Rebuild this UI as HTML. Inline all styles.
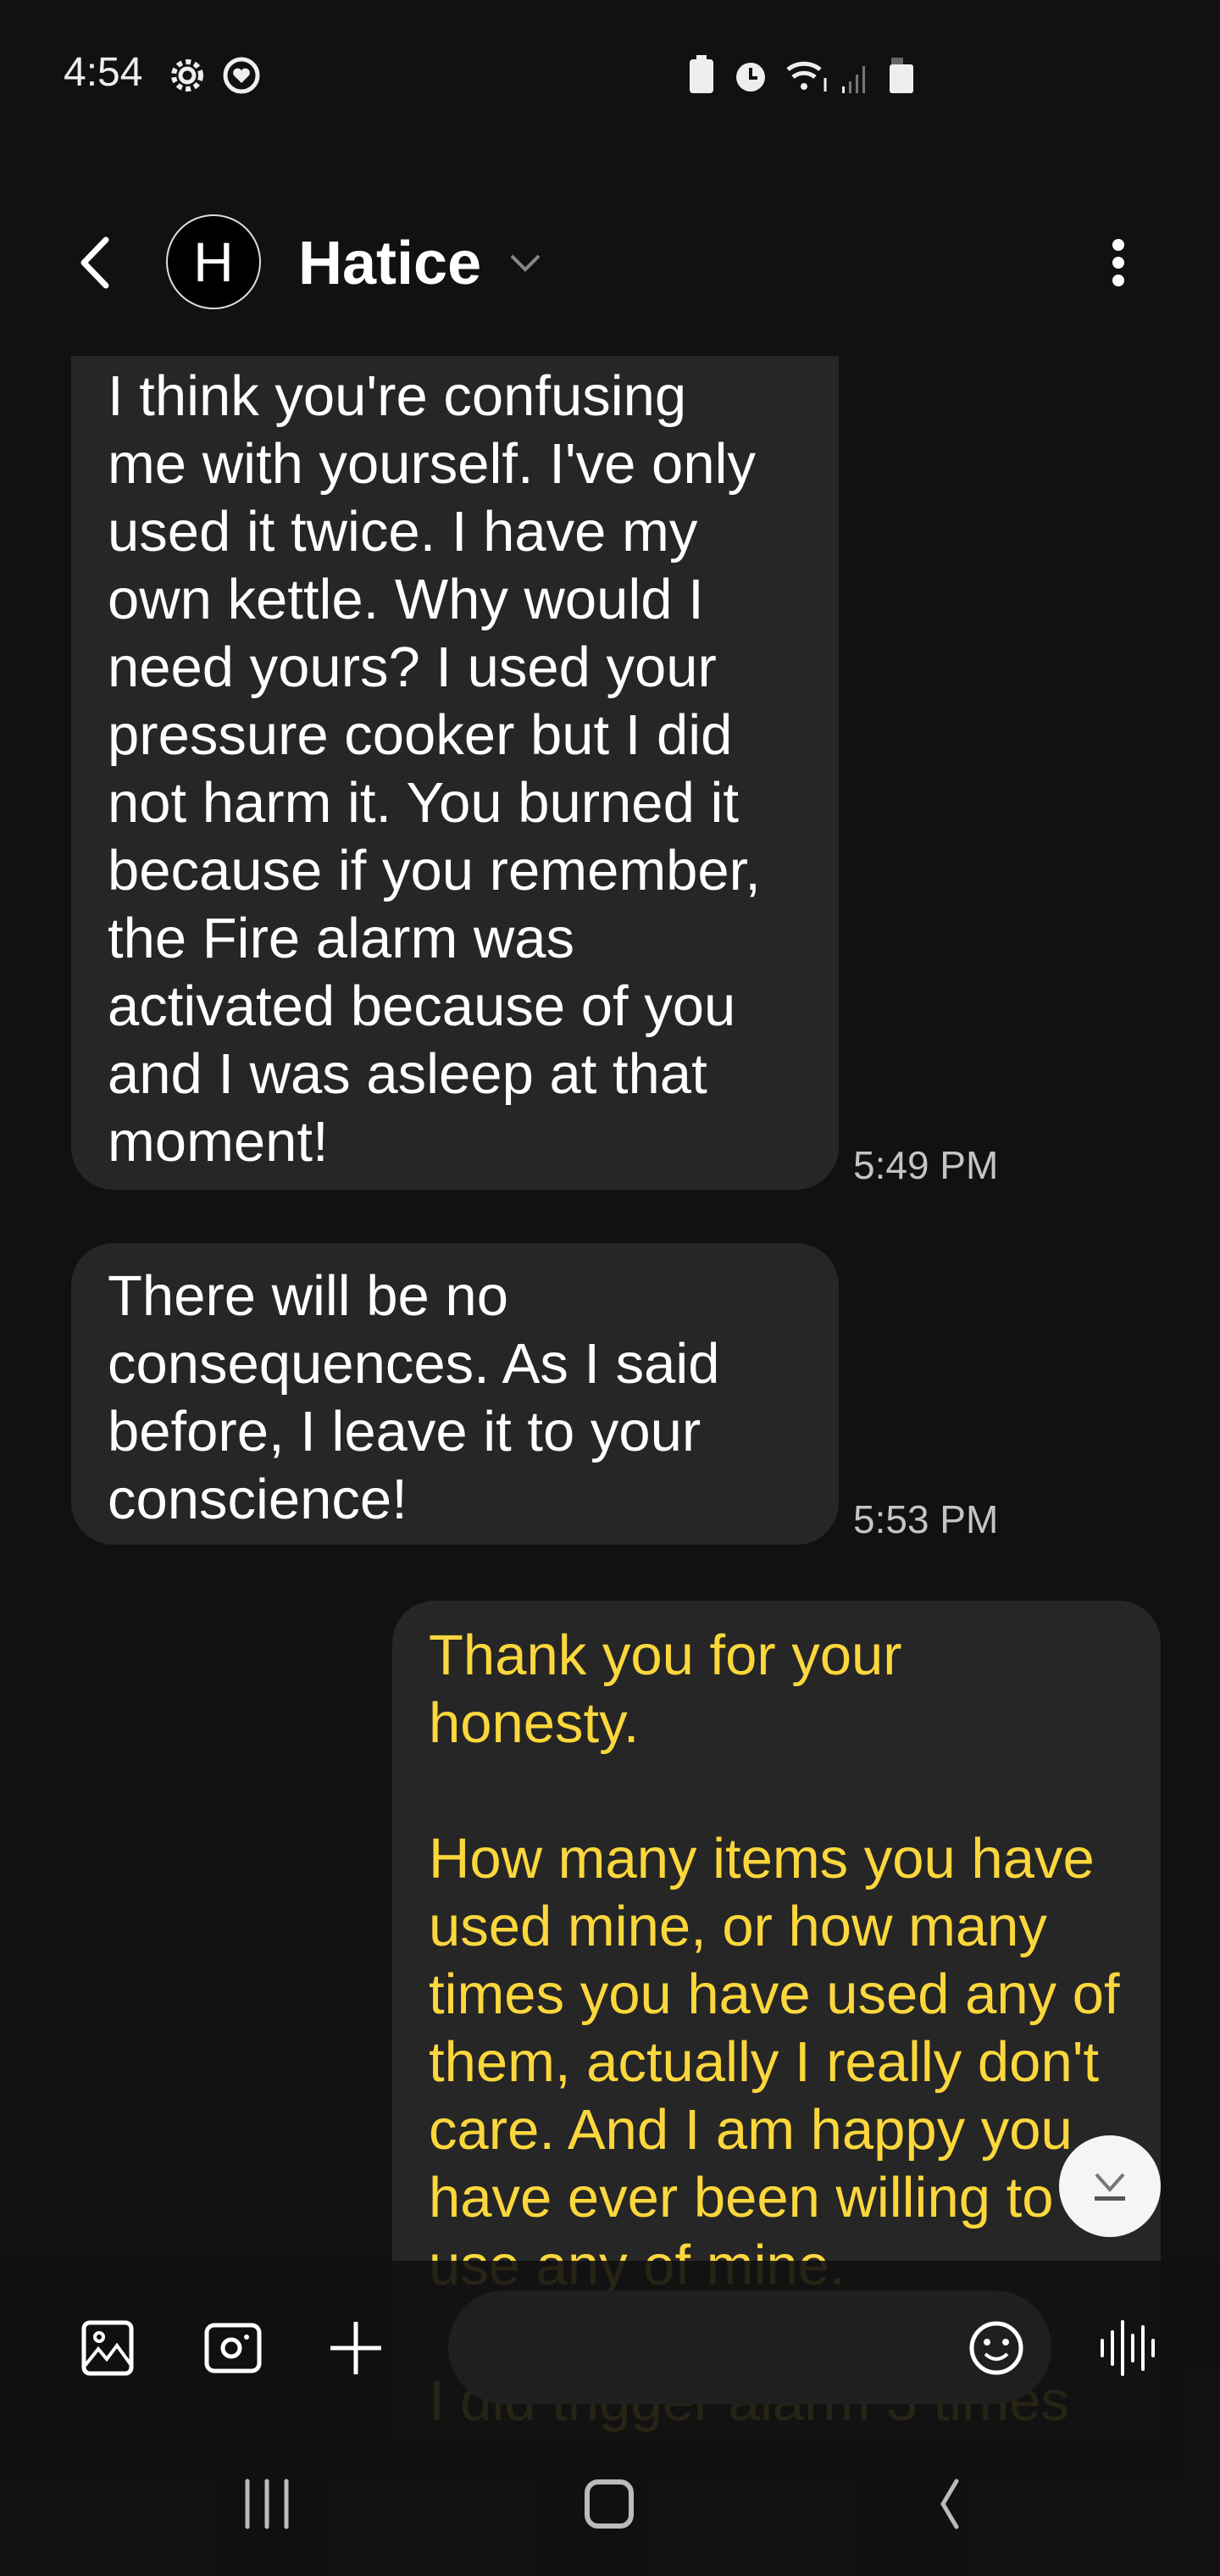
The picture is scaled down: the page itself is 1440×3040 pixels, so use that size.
<!DOCTYPE html>
<html><head><meta charset="utf-8"><style>
*{margin:0;padding:0;box-sizing:border-box}
body{width:1440px;height:3040px;background:#111;position:relative;overflow:hidden;font-family:"Liberation Sans",sans-serif}
.abs{position:absolute}
.b{position:absolute;background:#262626;border-radius:50px}
.t{position:absolute;font-size:67px;line-height:80px;white-space:pre;color:#fff}
.ts{position:absolute;font-size:46px;color:#c4c4c4;white-space:nowrap}
</style></head><body>
<!-- status bar -->
<div class="abs" style="left:75px;top:58px;font-size:48px;color:#eee">4:54</div>
<svg class="abs" style="left:196px;top:64px" width="50" height="50" viewBox="0 0 50 50"><circle cx="25" cy="25" r="8" fill="none" stroke="#eee" stroke-width="5"/><circle cx="25" cy="25" r="16" fill="none" stroke="#eee" stroke-width="6" stroke-dasharray="6 4.5"/></svg>
<svg class="abs" style="left:260px;top:64px" width="50" height="50" viewBox="0 0 50 50"><circle cx="25" cy="25" r="19" fill="none" stroke="#eee" stroke-width="5"/><path d="M25 34 L16 25 A5 5 0 0 1 25 19 A5 5 0 0 1 34 25 Z" fill="#eee"/></svg>
<svg class="abs" style="left:812px;top:64px" width="270" height="50" viewBox="0 0 270 50">
<rect x="2" y="6" width="28" height="40" rx="4" fill="#eee"/><rect x="10" y="1" width="12" height="6" fill="#eee"/>
<circle cx="74" cy="27" r="17" fill="#eee"/><path d="M74 16 V28 H82" stroke="#111" stroke-width="4" fill="none"/>
<path d="M118 18 A30 30 0 0 1 156 18" stroke="#eee" stroke-width="5" fill="none"/><path d="M124 27 A20 20 0 0 1 150 27" stroke="#eee" stroke-width="5" fill="none"/><circle cx="137" cy="38" r="4" fill="#eee"/>
<path d="M162 44 V28" stroke="#eee" stroke-width="3"/>
<rect x="182" y="38" width="3" height="8" fill="#eee"/><rect x="190" y="32" width="3" height="14" fill="#777"/><rect x="198" y="24" width="3" height="22" fill="#777"/><rect x="206" y="14" width="3" height="32" fill="#777"/>
<rect x="240" y="4" width="14" height="8" fill="#666"/><rect x="238" y="12" width="28" height="34" rx="3" fill="#eee"/>
</svg>
<!-- header -->
<svg class="abs" style="left:85px;top:275px" width="50" height="70" viewBox="0 0 50 70"><path d="M40 8 L14 35 L40 62" stroke="#fff" stroke-width="7" fill="none" stroke-linecap="round" stroke-linejoin="round"/></svg>
<div class="abs" style="left:196px;top:253px;width:112px;height:112px;border-radius:50%;background:#000;border:2px solid #ddd;color:#fff;font-size:66px;line-height:108px;text-align:center">H</div>
<div class="abs" style="left:352px;top:270px;font-size:72px;font-weight:bold;color:#fff">Hatice</div>
<svg class="abs" style="left:600px;top:296px" width="40" height="30" viewBox="0 0 40 30"><path d="M4 6 L20 22 L36 6" stroke="#888" stroke-width="4" fill="none"/></svg>
<div class="abs" style="left:1313px;top:282px;width:14px;height:14px;border-radius:50%;background:#fff"></div>
<div class="abs" style="left:1313px;top:303px;width:14px;height:14px;border-radius:50%;background:#fff"></div>
<div class="abs" style="left:1313px;top:324px;width:14px;height:14px;border-radius:50%;background:#fff"></div>
<!-- list -->
<div class="abs" style="left:0;top:420px;width:1440px;height:2620px;overflow:hidden">
 <div class="b" style="left:84px;top:-60px;width:906px;height:1044px"></div>
 <div class="t" style="left:127px;top:8px">I think you're confusing
me with yourself. I've only
used it twice. I have my
own kettle. Why would I
need yours? I used your
pressure cooker but I did
not harm it. You burned it
because if you remember,
the Fire alarm was
activated because of you
and I was asleep at that
moment!</div>
 <div class="ts" style="left:1007px;top:928px">5:49 PM</div>
 <div class="b" style="left:84px;top:1047px;width:906px;height:356px"></div>
 <div class="t" style="left:127px;top:1070px">There will be no
consequences. As I said
before, I leave it to your
conscience!</div>
 <div class="ts" style="left:1007px;top:1346px">5:53 PM</div>
 <div class="b" style="left:463px;top:1469px;width:907px;height:985px;border-radius:50px 50px 0 0"></div>
 <div class="t" style="left:506px;top:1494px;color:#fcd73c">Thank you for your
honesty.

How many items you have
used mine, or how many
times you have used any of
them, actually I really don't
care. And I am happy you
have ever been willing to
use any of mine.

I did trigger alarm 3 times</div>
</div>
<!-- scroll down button -->
<div class="abs" style="left:1250px;top:2520px;width:120px;height:120px;border-radius:50%;background:#f5f5f5"></div>
<svg class="abs" style="left:1280px;top:2550px" width="60" height="60" viewBox="0 0 60 60"><path d="M14 16 L30 34 L46 16" stroke="#777" stroke-width="4" fill="none"/><rect x="12" y="42" width="36" height="5" fill="#555"/></svg>
<!-- overlay -->
<div class="abs" style="left:0;top:2668px;width:1440px;height:372px;background:rgba(17,17,17,0.9)"></div>
<!-- composer -->
<div class="abs" style="left:529px;top:2703px;width:712px;height:134px;border-radius:67px;background:#1f1f1f"></div>
<svg class="abs" style="left:94px;top:2738px" width="66" height="66" viewBox="0 0 66 66"><rect x="5" y="3" width="56" height="60" rx="7" fill="none" stroke="#fff" stroke-width="5"/><circle cx="23" cy="20" r="5" fill="none" stroke="#fff" stroke-width="4"/><path d="M6 54 L22 34 L32 46 L44 30 L60 52" fill="none" stroke="#fff" stroke-width="4"/></svg>
<svg class="abs" style="left:240px;top:2738px" width="70" height="66" viewBox="0 0 70 66"><rect x="4" y="6" width="62" height="54" rx="9" fill="none" stroke="#fff" stroke-width="5"/><circle cx="33" cy="33" r="10" fill="none" stroke="#fff" stroke-width="5"/><circle cx="51" cy="20" r="3" fill="#fff"/></svg>
<svg class="abs" style="left:388px;top:2738px" width="64" height="66" viewBox="0 0 64 66"><path d="M32 2 V64 M2 33 H62" stroke="#fff" stroke-width="5"/></svg>
<svg class="abs" style="left:1143px;top:2738px" width="66" height="66" viewBox="0 0 66 66"><circle cx="33" cy="33" r="29" fill="none" stroke="#fff" stroke-width="5"/><circle cx="22" cy="26" r="4" fill="#fff"/><circle cx="44" cy="26" r="4" fill="#fff"/><path d="M20 40 Q33 52 46 40" fill="none" stroke="#fff" stroke-width="4"/></svg>
<svg class="abs" style="left:1296px;top:2738px" width="70" height="66" viewBox="0 0 70 66"><path d="M5 24 V42 M17 14 V52 M29 2 V64 M41 18 V48 M53 8 V58 M65 24 V42" stroke="#fff" stroke-width="4" stroke-linecap="round"/></svg>
<!-- nav -->
<svg class="abs" style="left:285px;top:2925px" width="60" height="60" viewBox="0 0 60 60"><path d="M7 3 V57 M30 3 V57 M53 3 V57" stroke="#bbb" stroke-width="5" stroke-linecap="round"/></svg>
<div class="abs" style="left:690px;top:2926px;width:58px;height:58px;border-radius:16px;border:6px solid #bbb"></div>
<svg class="abs" style="left:1095px;top:2925px" width="50" height="60" viewBox="0 0 50 60"><path d="M34 3 L18 30 L34 57" stroke="#bbb" stroke-width="5" fill="none" stroke-linecap="round"/></svg>
</body></html>
